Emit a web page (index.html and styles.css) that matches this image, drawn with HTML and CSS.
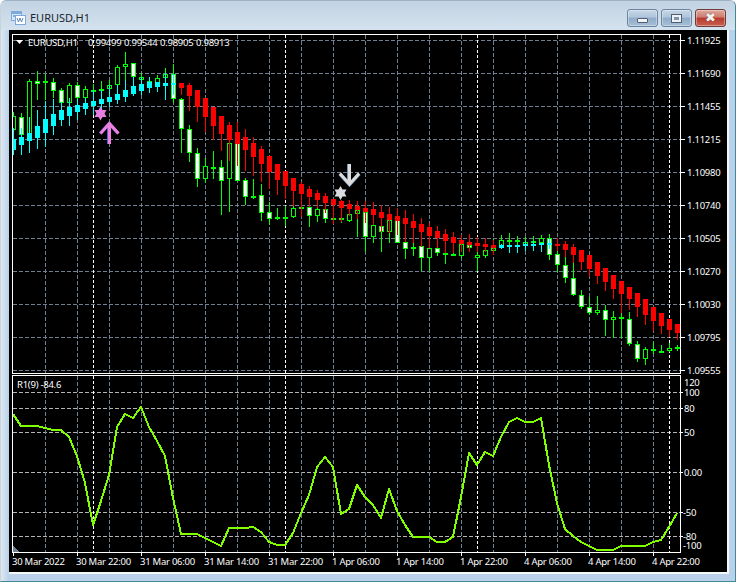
FILE: index.html
```html
<!DOCTYPE html>
<html lang="en">
<head>
<meta charset="utf-8">
<title>EURUSD,H1</title>
<link rel="stylesheet" href="styles.css">
</head>
<body>
<div class="window">
  <div class="titlebar">
    <svg class="app-icon" width="15" height="14" viewBox="0 0 15 14">
      <rect x="0.5" y="0.5" width="10" height="9" fill="#d8e8f8" stroke="#7fa9da"/>
      <rect x="1" y="1" width="9" height="2" fill="#7fa9da"/>
      <rect x="2" y="4" width="2" height="2" fill="#7fa9da"/>
      <rect x="6" y="4" width="2" height="2" fill="#7fa9da"/>
      <rect x="4.500" y="4.500" width="10" height="9" fill="#ffffff" stroke="#7fa9da"/>
      <path d="M6 7l1.500 4 1.500-4 1.500 4 1.500-4" fill="none" stroke="#5f88bd"/>
    </svg>
    <span class="title">EURUSD,H1</span>
    <div class="controls">
      <button class="ctl" aria-label="Minimize"><span class="min-glyph"></span></button>
      <button class="ctl" aria-label="Maximize"><span class="max-glyph"></span></button>
      <button class="ctl close" aria-label="Close"><span class="close-glyph">✖</span></button>
    </div>
  </div>
  <div class="chart">
    <svg class="plot" width="718" height="542" viewBox="9 30 718 542">
      <defs>
        <clipPath id="plot-clip"><rect x="13" y="35" width="667" height="339"/></clipPath>
      </defs>
      <g id="grid"></g>
      <g id="candles" clip-path="url(#plot-clip)"></g>
      <polyline id="osc" class="osc" points=""></polyline>

      <polygon class="shift" points="13,546 13,552 19,552"/>

      <path class="star pink" transform="translate(100.5 113.5)" d="M0-7 2-3.500 6-3.500 4 0 6 3.500 2 3.500 0 7-2 3.500-6 3.500-4 0-6-3.500-2-3.500Z"/>
      <path class="arrow-edge blue" d="M108.500 144V125M100 133.500L109 123.500 118 133.500"/>
      <path class="arrow pink-s" d="M109.500 144V125M100.500 133.500L109.500 123.500 118.500 133.500"/>
      <path class="star silver" transform="translate(340.500 193)" d="M0-7 2-3.500 6-3.500 4 0 6 3.500 2 3.500 0 7-2 3.500-6 3.500-4 0-6-3.500-2-3.500Z"/>
      <path class="arrow-edge steel" d="M348.500 164V183M339.500 174L349.500 185 359.500 174"/>
      <path class="arrow silver-s" d="M349.500 164V183M340 173.500L349.500 184 359 173.500"/>

      <g class="frame">
        <rect x="12.500" y="34.500" width="668" height="339"/>
        <rect x="12.500" y="375.500" width="668" height="177"/>
      </g>

      <g class="head">
        <path class="tri" d="M16 40h7l-3.500 4z"/>
        <text y="46"><tspan x="28">EURUSD,H1</tspan><tspan x="88">0.99499</tspan><tspan x="124">0.99544</tspan><tspan x="160">0.98905</tspan><tspan x="196">0.98913</tspan></text>
        <text x="17" y="388">R1(9) -84.6</text>
      </g>

      <g class="labels">
        <text x="687" y="44">1.11925</text>
        <text x="687" y="77">1.11690</text>
        <text x="687" y="110">1.11455</text>
        <text x="687" y="143">1.11215</text>
        <text x="687" y="176">1.10980</text>
        <text x="687" y="209">1.10740</text>
        <text x="687" y="242">1.10505</text>
        <text x="687" y="275">1.10270</text>
        <text x="687" y="308">1.10030</text>
        <text x="687" y="341">1.09795</text>
        <text x="687" y="374">1.09555</text>
        <text x="684" y="386">120</text>
        <text x="684" y="396">100</text>
        <text x="684" y="412">80</text>
        <text x="684" y="436">50</text>
        <text x="684" y="476">0.00</text>
        <text x="683" y="516">-50</text>
        <text x="683" y="540">-80</text>
        <text x="683" y="549">-100</text>
        <text x="12" y="565">30 Mar 2022</text>
        <text x="76" y="565">30 Mar 22:00</text>
        <text x="140" y="565">31 Mar 06:00</text>
        <text x="204" y="565">31 Mar 14:00</text>
        <text x="268" y="565">31 Mar 22:00</text>
        <text x="332" y="565">1 Apr 06:00</text>
        <text x="396" y="565">1 Apr 14:00</text>
        <text x="460" y="565">1 Apr 22:00</text>
        <text x="524" y="565">4 Apr 06:00</text>
        <text x="588" y="565">4 Apr 14:00</text>
        <text x="652" y="565">4 Apr 22:00</text>
      </g>
    </svg>
  </div>
</div>
<script src="chart.js"></script>
</body>
</html>
```
FILE: styles.css
```css
html, body {
  margin: 0;
  padding: 0;
  background: #ffffff;
}
.window {
  box-sizing: border-box;
  width: 736px;
  height: 582px;
  border-top: 1px solid #9fb2c4;
  border-left: 1px solid #c9d3dc;
  border-right: 1px solid #3f8a96;
  border-bottom: 1px solid #3f8a96;
  border-radius: 6px 6px 0 0;
  background: linear-gradient(90deg, #dfe8f0 0, #b9d1ea 8px, #b9d1ea 100%);
  overflow: hidden;
}
.titlebar {
  display: flex;
  align-items: flex-start;
  height: 29px;
  background: linear-gradient(#c3d3e2, #d4e2ef);
}
.app-icon {
  margin: 10px 0 0 10px;
  flex: none;
}
.title {
  margin: 8px 0 0 4px;
  font: 11px/18px "Noto Sans", sans-serif;
  color: #1c2530;
}
.controls {
  display: flex;
  gap: 3px;
  margin: 8px 9px 0 auto;
}
.ctl {
  display: flex;
  align-items: center;
  justify-content: center;
  box-sizing: border-box;
  width: 31px;
  height: 18px;
  padding: 0;
  border: 1px solid #6d84a0;
  border-radius: 3px;
  background: linear-gradient(#c6d6e6 0, #afc5db 45%, #8fabc8 50%, #a6bfd6 100%);
  box-shadow: inset 0 0 0 1px rgba(255, 255, 255, .35);
}
.ctl.close {
  border-color: #6e3a3a;
  background: linear-gradient(#dfa99f 0, #cc7b6d 45%, #b73a2c 50%, #c8604f 100%);
}
.min-glyph {
  box-sizing: border-box;
  width: 11px;
  height: 5px;
  margin-top: 4px;
  border: 1px solid #4f5f72;
  border-radius: 1px;
  background: #f2f4f6;
}
.max-glyph {
  display: flex;
  align-items: center;
  justify-content: center;
  box-sizing: border-box;
  width: 11px;
  height: 9px;
  border: 1px solid #4f5f72;
  background: #eef2f6;
}
.max-glyph::after {
  content: "";
  width: 5px;
  height: 3px;
  background: #7f94aa;
}
.close-glyph {
  font: bold 13px/14px "DejaVu Sans", sans-serif;
  color: #f4f1f0;
  text-shadow: 0 0 1px #5a2020;
}
.chart {
  box-sizing: content-box;
  width: 718px;
  height: 542px;
  margin-left: 8px;
  border-right: 2px solid #f4f8fb;
  border-bottom: 2px solid #f4f8fb;
  background: #000000;
}
.plot {
  display: block;
}
.plot text {
  font-family: "Noto Sans", sans-serif;
  font-size: 9.5px;
  letter-spacing: -0.25px;
  fill: #ffffff;
}
#grid, #candles, .frame, .osc, .shift {
  shape-rendering: crispEdges;
}
.grid-v { stroke: #708090; stroke-dasharray: 4 2; }
.grid-h { stroke: #708090; stroke-dasharray: 4 2; }
.grid-i { stroke: #b4b4b4; stroke-dasharray: 4 2; }
.grid-s { stroke: #ffffff; stroke-dasharray: 3 2; }
.tick { stroke: #ffffff; }
.frame rect { fill: none; stroke: #ffffff; }
.osc { fill: none; stroke: #7fff00; stroke-width: 2; stroke-linejoin: round; }
.shift { fill: #708090; }
.star.pink { fill: #e77fe0; }
.star.silver { fill: #d9dce0; }
.arrow, .arrow-edge { fill: none; stroke-width: 3; }
.arrow-edge.blue { stroke: #4b63c8; }
.arrow-edge.steel { stroke: #6f93b8; }
.pink-s { stroke: #f080e0; }
.silver-s { stroke: #dcdcdc; }
.tri { fill: #ffffff; }
```
FILE: chart.js
```js
(function () {
  var NS = 'http://www.w3.org/2000/svg';
  function el(parent, name, attrs) {
    var n = document.createElementNS(NS, name);
    for (var k in attrs) n.setAttribute(k, attrs[k]);
    parent.appendChild(n);
    return n;
  }
  function rect(p, x, y, w, h, fill) {
    el(p, 'rect', { x: x, y: y, width: w, height: h, fill: fill });
  }
  function line(p, x1, y1, x2, y2, cls) {
    el(p, 'line', { x1: x1, y1: y1, x2: x2, y2: y2, 'class': cls });
  }

  /* ---- grid ---- */
  var grid = document.getElementById('grid');
  var i;
  var priceY = [40, 73, 106, 139, 172, 205, 238, 271, 304, 337, 370];
  priceY.forEach(function (y) {
    line(grid, 13, y + .5, 680, y + .5, 'grid-h');
    line(grid, 681, y + .5, 685, y + .5, 'tick');
  });
  [392, 408, 432, 472, 512, 536].forEach(function (y) {
    line(grid, 13, y + .5, 680, y + .5, 'grid-i');
    line(grid, 681, y + .5, 683, y + .5, 'tick');
  });
  for (i = 45; i < 680; i += 32) {
    line(grid, i + .5, 35, i + .5, 374, 'grid-v');
    line(grid, i + .5, 376, i + .5, 552, 'grid-v');
  }
  [93, 285, 477, 669].forEach(function (x) {
    line(grid, x + .5, 35, x + .5, 374, 'grid-s');
    line(grid, x + .5, 376, x + .5, 552, 'grid-s');
  });
  for (i = 13; i < 680; i += 64) {
    line(grid, i + .5, 553, i + .5, 556, 'tick');
  }

  /* ---- real candles: wick top, wick bottom, body top, body bottom, kind
     (f = white body, e = hollow body, d = flat dash) ---- */
  var real = [
    [112,136,116,130,'e'],[113,136,117,135,'f'],[79,141,81,140,'e'],[71,100,81,84,'f'],
    [74,100,81,83,'d'],[78,98,82,91,'f'],[88,107,90,103,'f'],[83,107,85,103,'e'],
    [82,107,85,98,'f'],[86,103,89,98,'e'],[84,103,90,91,'d'],[81,100,89,91,'e'],
    [80,97,85,89,'e'],[65,93,67,85,'e'],[52,82,64,67,'e'],[63,88,63,77,'f'],
    [73,85,77,80,'e'],[77,88,81,87,'f'],[75,90,78,85,'e'],[68,100,74,78,'e'],
    [64,103,74,99,'f'],[98,153,99,129,'f'],[125,162,129,153,'f'],[148,187,153,179,'f'],
    [158,183,166,179,'e'],[151,179,167,169,'d'],[160,215,167,181,'f'],[143,212,143,179,'e'],
    [143,181,143,181,'f'],[178,205,180,197,'f'],[179,199,196,198,'d'],[184,221,195,213,'f'],
    [202,225,212,219,'f'],[208,220,217,219,'e'],[206,226,217,218,'d'],[204,218,208,217,'e'],
    [197,217,207,209,'d'],[207,227,207,216,'f'],[205,222,209,216,'e'],[208,223,209,219,'f'],
    [204,224,218,220,'d'],[213,223,218,220,'f'],[205,222,214,221,'e'],[207,237,210,214,'e'],
    [210,252,212,237,'f'],[215,243,225,237,'e'],[226,252,226,232,'f'],[215,243,220,232,'e'],
    [216,243,220,243,'f'],[240,259,242,249,'f'],[235,256,247,249,'d'],[240,271,246,258,'f'],
    [240,271,248,258,'e'],[243,256,248,253,'f'],[240,264,253,255,'d'],[243,256,254,256,'d'],
    [235,258,244,256,'e'],[238,250,245,248,'f'],[240,271,255,258,'e'],[240,258,250,256,'e'],
    [239,255,248,251,'e'],[235,247,240,246,'e'],[233,247,240,242,'d'],[236,247,240,242,'d'],
    [237,247,242,245,'e'],[236,246,241,243,'d'],[235,249,238,243,'e'],[234,260,238,255,'f'],
    [240,272,254,265,'f'],[257,283,265,278,'f'],[263,296,278,295,'f'],[290,309,295,307,'f'],
    [297,315,307,313,'f'],[296,315,310,313,'e'],[305,336,310,320,'f'],[311,338,317,320,'e'],
    [305,338,317,319,'f'],[312,346,319,344,'f'],[341,362,344,359,'f'],[347,365,349,359,'e'],
    [342,354,349,351,'e'],[345,353,351,353,'d'],[343,352,348,351,'e'],[345,351,347,349,'d']
  ];

  /* ---- smoothed bars: wick top, wick bottom, body top, body bottom ---- */
  var smooth = [
    [128,155,139,150],[128,155,137,145],[117,153,133,141],[110,149,126,138],
    [101,147,119,133],[99,135,114,126],[102,126,110,120],[98,126,107,116],
    [99,120,105,112],[98,115,103,109],[90,115,101,106],[90,110,99,104],
    [85,107,97,102],[85,104,94,100],[80,102,90,97],[77,96,86,94],
    [77,95,84,91],[77,93,82,88],[82,92,82,87],[73,100,83,86],
    [74,95,83,85],[83,95,83,88],[83,111,85,96],[90,122,90,107],
    [98,132,98,117],[107,140,107,126],[116,151,116,134],[122,161,125,140],
    [122,166,132,144],[129,171,137,150],[137,176,143,157],[146,182,149,164],
    [156,189,156,172],[164,195,164,180],[171,199,171,186],[178,206,178,191],
    [182,217,184,194],[186,207,189,197],[190,208,193,200],[193,213,196,203],
    [199,224,199,205],[200,222,201,208],[200,216,204,209],[201,219,206,210],
    [201,223,208,212],[202,225,209,215],[205,232,212,218],[207,233,214,220],
    [208,235,216,221],[210,242,218,224],[214,243,221,228],[218,247,224,232],
    [223,248,227,236],[226,248,231,238],[229,253,234,241],[232,253,237,243],
    [235,252,240,244],[234,252,242,245],[237,252,243,246],[238,252,244,247],
    [240,255,245,248],[244,249,245,248],[245,253,245,247],[245,253,245,247],
    [241,251,244,246],[241,251,244,246],[243,252,243,245],[239,249,243,245],
    [238,251,244,246],[241,257,244,250],[244,263,247,255],[250,270,250,262],
    [255,277,255,269],[262,284,262,276],[268,291,268,282],[275,299,275,289],
    [281,313,281,294],[287,310,287,299],[293,317,293,307],[299,325,299,315],
    [307,331,307,321],[313,334,313,326],[319,337,319,330],[324,340,324,333]
  ];

  var candles = document.getElementById('candles');
  var GREEN = '#00ff00', WHITE = '#ffffff', BLACK = '#000000';
  real.forEach(function (c, n) {
    var x = 13 + 8 * n;
    var h = Math.max(c[3] - c[2], 2);
    rect(candles, x, c[0], 1, c[1] - c[0], GREEN);
    rect(candles, x - 2, c[2], 5, h, GREEN);
    if (c[4] !== 'd' && h > 2) {
      rect(candles, x - 1, c[2] + 1, 3, h - 2, c[4] === 'f' ? WHITE : BLACK);
    }
  });
  smooth.forEach(function (c, n) {
    var x = 13 + 8 * n;
    var up = n <= 20 || (n >= 61 && n <= 67);
    var col = up ? '#00ffff' : '#ff0000';
    rect(candles, x, c[0], 1, c[1] - c[0], col);
    rect(candles, x - 2, c[2], 5, c[3] - c[2], col);
  });

  /* ---- oscillator ---- */
  var osc = [
    414,426,426,426,428,430,430,437,456,483,525,501,475,427,414,418,407,427,441,456,498,
    534,534,534,538,542,546,528,528,528,527,532,542,545,545,533,513,495,467,457,467,514,
    509,485,497,505,518,489,511,525,537,537,537,542,542,537,497,453,465,452,456,437,422,
    418,422,422,418,465,503,529,536,542,546,550,550,550,546,546,546,546,542,540,527,513
  ];
  document.getElementById('osc').setAttribute('points', osc.map(function (y, n) {
    return (13 + 8 * n) + ',' + y;
  }).join(' '));
})();
```
